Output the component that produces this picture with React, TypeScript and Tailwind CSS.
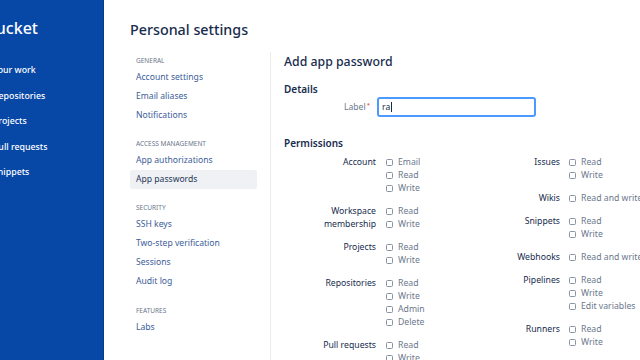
import React from 'react'

const sans = { fontFamily: '"Noto Sans", "Liberation Sans", sans-serif' }

const mainNav = ['Your work', 'Repositories', 'Projects', 'Pull requests', 'Snippets']

const settingsNav = [
  { title: 'General', items: ['Account settings', 'Email aliases', 'Notifications'] },
  { title: 'Access management', items: ['App authorizations', 'App passwords'] },
  { title: 'Security', items: ['SSH keys', 'Two-step verification', 'Sessions', 'Audit log'] },
  { title: 'Features', items: ['Labs'] },
]

const leftPerms = [
  { label: ['Account'], opts: ['Email', 'Read', 'Write'] },
  { label: ['Workspace', 'membership'], opts: ['Read', 'Write'] },
  { label: ['Projects'], opts: ['Read', 'Write'] },
  { label: ['Repositories'], opts: ['Read', 'Write', 'Admin', 'Delete'] },
  { label: ['Pull requests'], opts: ['Read', 'Write'] },
]

const rightPerms = [
  { label: ['Issues'], opts: ['Read', 'Write'] },
  { label: ['Wikis'], opts: ['Read and write'] },
  { label: ['Snippets'], opts: ['Read', 'Write'] },
  { label: ['Webhooks'], opts: ['Read and write'] },
  { label: ['Pipelines'], opts: ['Read', 'Write', 'Edit variables'] },
  { label: ['Runners'], opts: ['Read', 'Write'] },
]

function PermGroup({ label, opts, labelWidth }: { label: string[]; opts: string[]; labelWidth: string }) {
  return (
    <div className="flex mb-[10px]">
      <div className={`${labelWidth} shrink-0 text-right text-[8.7px] leading-[13px] text-[#172b4d]`}>
        {label.map((l) => (
          <div key={l}>{l}</div>
        ))}
      </div>
      <div className="flex flex-col">
        {opts.map((o) => (
          <div key={o} className="flex items-center h-[13px] whitespace-nowrap">
            <span className="w-[7px] h-[7px] border border-[#8993a4] rounded-[1.5px] bg-white shrink-0" />
            <span className="ml-[5px] text-[8.7px] leading-[13px] pt-[1px] text-[#6b778c]">{o}</span>
          </div>
        ))}
      </div>
    </div>
  )
}

export default function App() {
  return (
    <div className="flex w-[640px] h-[360px] overflow-hidden bg-white" style={sans}>
      {/* product sidebar, scrolled partly out of view */}
      <aside className="w-[104px] shrink-0 bg-[#0747a6] border-r border-[#063a8a] overflow-hidden text-white">
        <div className="ml-[-35px] mt-[18px] text-[16px] leading-[20px] font-medium whitespace-nowrap">Bitbucket</div>
        <nav className="mt-[20px] flex flex-col">
          {mainNav.map((n) => (
            <div key={n} className="h-[25.5px] flex items-center ml-[-7px] text-[8.8px] font-medium whitespace-nowrap">
              {n}
            </div>
          ))}
        </nav>
      </aside>

      <main className="flex-1 pl-[26px] pt-[21px]">
        <h1 className="text-[14.3px] leading-[18px] font-medium text-[#172b4d]">Personal settings</h1>

        <div className="flex mt-[13px]">
          <nav className="w-[127px] shrink-0 pt-[2px]">
            {settingsNav.map((s, i) => (
              <div key={s.title} className={i === 0 ? '' : i === 3 ? 'mt-[13px]' : 'mt-[12px]'}>
                <div className="h-[14px] flex items-center px-[6px] text-[6.5px] uppercase text-[#6b778c]">{s.title}</div>
                {s.items.map((it) => (
                  <div
                    key={it}
                    className={`h-[19px] flex items-center px-[6px] text-[8.6px] rounded-[2px] ${
                      it === 'App passwords' ? 'bg-[#f0f1f4] text-[#253858]' : 'text-[#3c5d99]'
                    }`}
                  >
                    {it}
                  </div>
                ))}
              </div>
            ))}
          </nav>

          <section className="ml-[13px] border-l border-[#ebecf0] pl-[13px] pt-[2px] flex-1 min-w-0 h-[320px]">
            <h2 className="text-[12.3px] leading-[16px] font-medium text-[#172b4d]">Add app password</h2>

            <h3 className="mt-[12px] text-[10px] leading-[14px] font-semibold text-[#172b4d]">Details</h3>
            <div className="mt-[1px] flex items-center">
              <div className="w-[86px] text-right text-[8.6px] text-[#6b778c]">
                Label<sup className="text-[#de350b] text-[6px] ml-[1px]">*</sup>
              </div>
              <div className="ml-[7px] w-[159px] h-[20px] border-2 border-[#4c9aff] rounded-[3px] flex items-center px-[3px] text-[8.6px] text-[#172b4d]">
                ra<span className="w-px h-[10px] bg-[#172b4d] ml-[1px]" />
              </div>
            </div>

            <h3 className="mt-[19px] text-[10px] leading-[14px] font-semibold text-[#172b4d]">Permissions</h3>
            <div className="mt-[5.5px] flex">
              <div className="w-[186px] shrink-0">
                {leftPerms.map((p) => (
                  <PermGroup key={p.label[0]} label={p.label} opts={p.opts} labelWidth="w-[102px] pr-[10px]" />
                ))}
              </div>
              <div className="flex-1 whitespace-nowrap">
                {rightPerms.map((p) => (
                  <PermGroup key={p.label[0]} label={p.label} opts={p.opts} labelWidth="w-[99px] pr-[9px]" />
                ))}
              </div>
            </div>
          </section>
        </div>
      </main>
    </div>
  )
}
